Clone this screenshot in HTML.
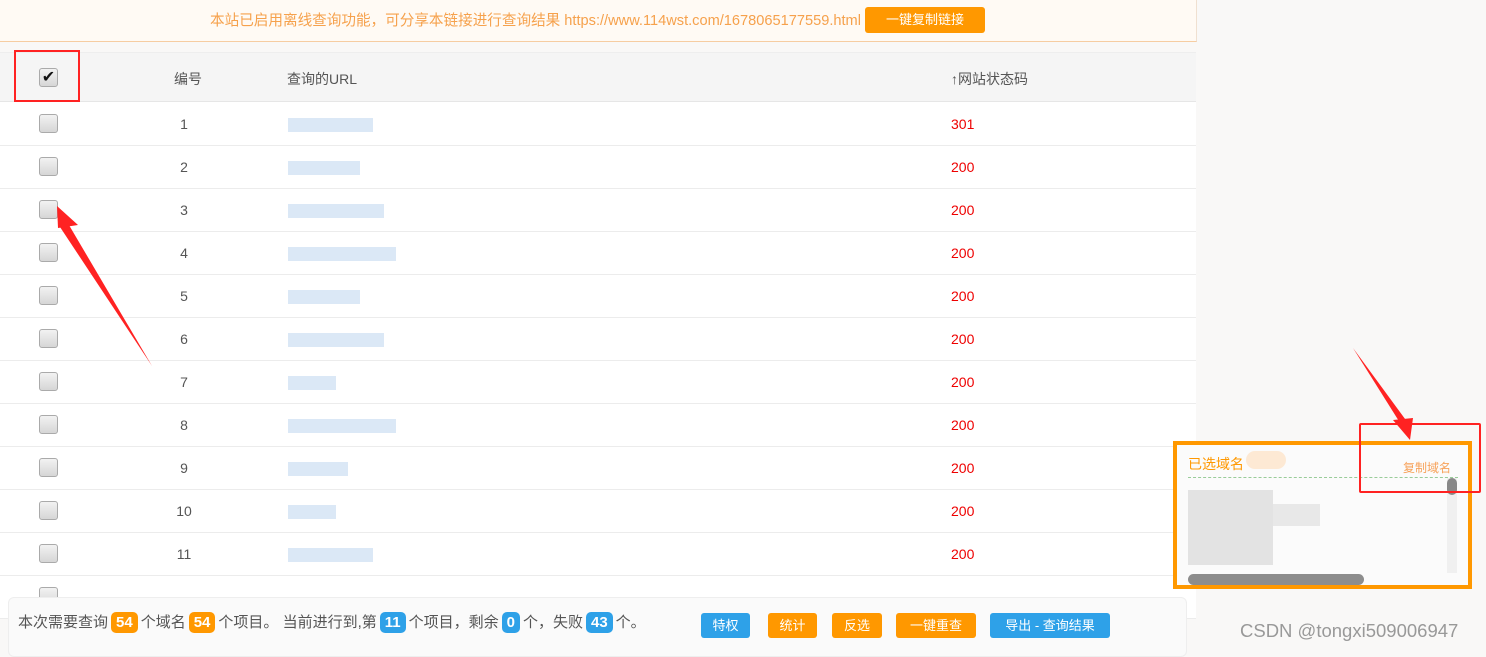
<!DOCTYPE html>
<html><head><meta charset="utf-8"><style>
*{margin:0;padding:0;box-sizing:border-box}
body{width:1486px;height:651px;overflow:hidden;background:#f9f8f7;font-family:"Liberation Sans","Noto Sans CJK SC",sans-serif;font-size:14px;color:#555;position:relative}
.abs{position:absolute}
.banner{left:0;top:0;width:1197px;height:42px;background:#fffaf4;border-bottom:1px solid #f6cda2;border-right:1px solid #f0e0d0}
.banner .t{left:210px;top:9px;color:#f6a14c;font-size:14.6px;white-space:nowrap}
.banner .b{left:865px;top:7px;width:120px;height:26px;background:#ff9800;color:#fff;border-radius:3px;text-align:center;line-height:26px;font-size:13px}
.table{left:0;top:52px;width:1196px;height:560px;background:#fff}
.hdr{left:0;top:0;width:1196px;height:50px;background:#f5f5f5;border-top:1px solid #eee;border-bottom:1px solid #e6e6e6}
.row{left:0;width:1196px;height:43px;border-bottom:1px solid #ececec}
.cb{left:39px;width:19px;height:19px;border:1px solid #aaa;border-radius:3px;background:linear-gradient(#f2f2f2,#d6d6d6)}
.num{left:170px;width:28px;text-align:center}
.st{left:951px;color:#e00}
.url{left:288px;height:14px;background:#dbe8f6}
.foot{left:8px;top:597px;width:1179px;height:60px;background:#fafafa;border:1px solid #eee;border-radius:6px}
.badge{display:inline-block;padding:0 5px;border-radius:5px;color:#fff;font-weight:bold;height:21px;line-height:21px;margin:0 3px}
.btn{top:613px;height:25px;line-height:25px;color:#fff;border-radius:3px;text-align:center;font-size:13px}
</style></head><body>
<div class="abs banner"><div class="abs t">本站已启用离线查询功能，可分享本链接进行查询结果 https://www.114wst.com/1678065177559.html</div><div class="abs b">一键复制链接</div></div>
<div class="abs table">
<div class="abs hdr">
<div class="abs cb" style="top:15px;color:#111;font-size:16px;line-height:17px;text-align:center">✔</div>
<div class="abs" style="left:174px;top:16px">编号</div>
<div class="abs" style="left:287px;top:16px">查询的URL</div>
<div class="abs" style="left:951px;top:16px">↑网站状态码</div>
</div>
</div>
<div id="rows"></div>
<div class="abs" style="left:14px;top:50px;width:66px;height:52px;border:2px solid #f22"></div>
<div class="abs foot"></div>
<div class="abs" style="left:18px;top:612px;font-size:15px;line-height:22px;color:#555;white-space:nowrap">本次需要查询<span class="badge" style="background:#ff9800">54</span>个域名<span class="badge" style="background:#ff9800">54</span>个项目。 当前进行到,第<span class="badge" style="background:#2ea1e8">11</span>个项目，剩余<span class="badge" style="background:#2ea1e8">0</span>个，失败<span class="badge" style="background:#2ea1e8">43</span>个。</div>
<div class="abs btn" style="left:701px;width:49px;background:#2ea1e8">特权</div>
<div class="abs btn" style="left:768px;width:49px;background:#ff9800">统计</div>
<div class="abs btn" style="left:832px;width:50px;background:#ff9800">反选</div>
<div class="abs btn" style="left:896px;width:80px;background:#ff9800">一键重查</div>
<div class="abs btn" style="left:990px;width:120px;background:#2ea1e8">导出 - 查询结果</div>
<div class="abs" style="left:1240px;top:620px;color:#999;font-size:18.5px;white-space:nowrap">CSDN @tongxi509006947</div>
<div class="abs" style="left:1173px;top:441px;width:299px;height:148px;border:4px solid #ff9800;background:#fbfbfb"></div>
<div class="abs" style="left:1188px;top:454px;color:#ff9800;font-size:14px">已选域名</div>
<div class="abs" style="left:1246px;top:451px;width:40px;height:18px;background:#fde9d4;border-radius:9px"></div>
<div class="abs" style="left:1403px;top:459px;color:#f7a25a;font-size:12px">复制域名</div>
<div class="abs" style="left:1188px;top:477px;width:270px;border-top:1px dashed #9c9"></div>
<div class="abs" style="left:1188px;top:490px;width:85px;height:75px;background:#ddd;opacity:.8"></div>
<div class="abs" style="left:1273px;top:504px;width:47px;height:22px;background:#e8e8e8"></div>
<div class="abs" style="left:1447px;top:478px;width:10px;height:95px;background:#f0f0f0"></div>
<div class="abs" style="left:1447px;top:478px;width:10px;height:17px;background:#888;border-radius:5px"></div>
<div class="abs" style="left:1188px;top:574px;width:176px;height:11px;background:#8d8d8d;border-radius:6px"></div>
<div class="abs" style="left:1359px;top:423px;width:122px;height:70px;border:2px solid #f22;border-radius:2px"></div>
<svg class="abs" style="left:0;top:0" width="1486" height="651">
<polygon points="152,366 66,220 58,224" fill="#f22"/><polygon points="57,206 78,225 58,228" fill="#f22"/>
<polygon points="1353,348 1402,426 1408,423" fill="#f22"/><polygon points="1410,440 1393,420 1413,418" fill="#f22"/>
</svg>
<script>
var w=[85,72,96,108,72,96,48,108,60,48,85],s=['301','200','200','200','200','200','200','200','200','200','200'],h='';
for(var i=0;i<12;i++){var y=103+i*43;h+='<div class="abs row" style="top:'+y+'px;background:#fff"></div><div class="abs cb" style="top:'+(y+11)+'px"></div>';
if(i<11)h+='<div class="abs num" style="top:'+(y+13)+'px">'+(i+1)+'</div><div class="abs url" style="top:'+(y+15)+'px;width:'+w[i]+'px"></div><div class="abs st" style="top:'+(y+13)+'px">'+s[i]+'</div>';}
document.getElementById('rows').innerHTML=h;
</script>
</body></html>
